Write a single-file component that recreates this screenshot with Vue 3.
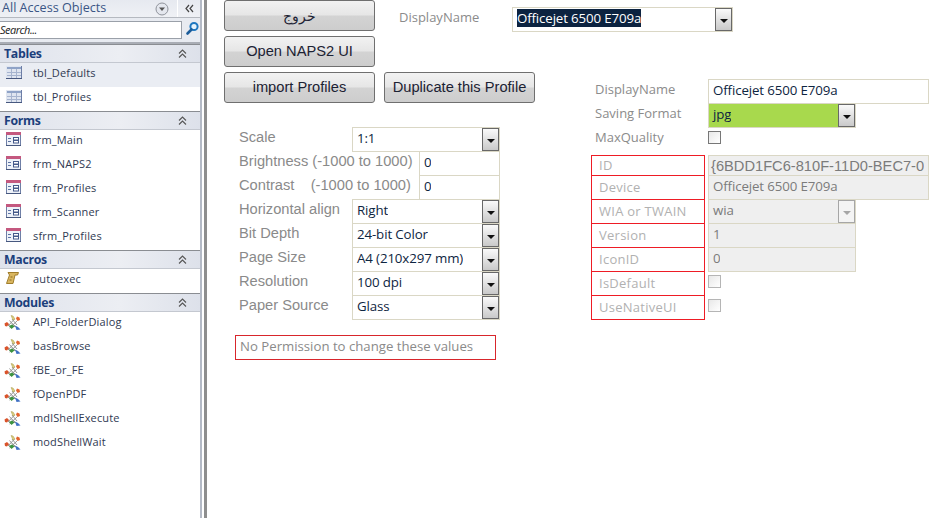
<script setup>
const navGroups = [
  { title: 'Tables', kind: 'table', items: ['tbl_Defaults', 'tbl_Profiles'] },
  { title: 'Forms', kind: 'form', items: ['frm_Main', 'frm_NAPS2', 'frm_Profiles', 'frm_Scanner', 'sfrm_Profiles'] },
  { title: 'Macros', kind: 'macro', items: ['autoexec'] },
  { title: 'Modules', kind: 'module', items: ['API_FolderDialog', 'basBrowse', 'fBE_or_FE', 'fOpenPDF', 'mdlShellExecute', 'modShellWait'] },
]
const scanRows = [
  { label: 'Scale', value: '1:1', combo: true },
  { label: 'Brightness (-1000 to 1000)', value: '0', wide: true },
  { label: 'Contrast    (-1000 to 1000)', value: '0', wide: true },
  { label: 'Horizontal align', value: 'Right', combo: true },
  { label: 'Bit Depth', value: '24-bit Color', combo: true },
  { label: 'Page Size', value: 'A4 (210x297 mm)', combo: true },
  { label: 'Resolution', value: '100 dpi', combo: true },
  { label: 'Paper Source', value: 'Glass', combo: true },
]
const lockedRows = [
  { label: 'ID', value: '{6BDD1FC6-810F-11D0-BEC7-0', type: 'id' },
  { label: 'Device', value: 'Officejet 6500 E709a', type: 'long' },
  { label: 'WIA or TWAIN', value: 'wia', type: 'combo' },
  { label: 'Version', value: '1', type: 'short' },
  { label: 'IconID', value: '0', type: 'short' },
  { label: 'IsDefault', type: 'check' },
  { label: 'UseNativeUI', type: 'check' },
]
</script>

<template>
  <div class="app">
    <aside class="nav">
      <div class="nav-head">
        <span class="nav-title">All Access Objects</span>
        <svg class="head-drop" width="14" height="14" viewBox="0 0 14 14"><circle cx="7" cy="7" r="6" fill="#e4e7ee" stroke="#8f939b"/><path d="M4 5.500h6L7 9z" fill="#555"/></svg>
        <span class="head-collapse">
          <svg width="9" height="9" viewBox="0 0 9 9" fill="none" stroke="#444" stroke-width="1.200"><path d="M4 1 1 4.500 4 8M8 1 5 4.500 8 8"/></svg>
        </span>
      </div>
      <div class="search">
        <div class="search-box">Search...</div>
        <svg width="15" height="15" viewBox="0 0 15 15"><circle cx="9" cy="5.500" r="3.600" fill="#e6f3fc" stroke="#1f78c0" stroke-width="2"/><path d="M6.500 8.500 2.500 12.500" stroke="#1b5c9a" stroke-width="2.600" stroke-linecap="round"/></svg>
      </div>
      <section v-for="g in navGroups" :key="g.title" class="group">
        <div class="group-head">
          <span>{{ g.title }}</span>
          <svg width="9" height="9" viewBox="0 0 9 9" fill="none" stroke="#555" stroke-width="1.100"><path d="M1 4.500 4.500 1 8 4.500M1 8.500 4.500 5 8 8.500"/></svg>
        </div>
        <div v-for="item in g.items" :key="item" class="nav-row" :class="{ hot: item === 'tbl_Defaults' }">
          <svg v-if="g.kind === 'table'" class="ico" width="16" height="13" viewBox="0 0 16 13">
            <rect width="16" height="13" fill="#6d7ea6"/>
            <rect x="0" y="0" width="15" height="12" fill="#dfe5f0"/>
            <rect x="1" y="1" width="14" height="2" fill="#8fa3c7"/>
            <path d="M1 6.500h14M1 9.500h14M5.500 3v9M10.500 3v9" stroke="#a6b4cf"/>
            <rect x="0" y="12" width="16" height="1" fill="#47587f"/>
          </svg>
          <svg v-else-if="g.kind === 'form'" class="ico" width="15" height="14" viewBox="0 0 15 14">
            <rect x=".5" y=".5" width="14" height="13" fill="#eef2f9" stroke="#6f7fa6"/>
            <rect x="0" y="0" width="15" height="3" fill="#c4587f"/>
            <path d="M2 6.500h3M2 9.500h3" stroke="#5d74a5"/>
            <rect x="7.500" y="5.500" width="5" height="2.500" fill="#fff" stroke="#44598a"/>
            <rect x="7.500" y="8.500" width="5" height="2.500" fill="#fff" stroke="#44598a"/>
            <rect x="0" y="13" width="15" height="1" fill="#47587f"/>
          </svg>
          <svg v-else-if="g.kind === 'macro'" class="ico macro" width="13" height="12" viewBox="0 0 13 12">
            <path d="M2 .5h10.500l-1 2.500L9 3 7 11.500H.5L3.500 3z" fill="#d9b660" stroke="#a07d2c"/>
            <path d="M4.500 5 6.500 5M3.500 8H5.500" stroke="#8c6a22"/>
          </svg>
          <svg v-else class="ico mod" width="17" height="15" viewBox="0 0 17 15">
            <path d="M3 8 7 13M5.500 5.500 11 12M8 4l5 6M13 6l-7.500 7M10.500 4 4 11M8.500 8.500 13 13" stroke="#8d8d8d" stroke-width=".9" fill="none"/>
            <path d="M7 .5l2 .5 2 3-2 1z" fill="#dccf80" stroke="#a69a4a" stroke-width=".5"/>
            <path d="M13 1.500l2.500 1 .5 2.500-2.500 1-1.500-2.500z" fill="#e2622e"/>
            <path d="M.5 8.500l2.500-1.500 2 2L3 11.500 1 11z" fill="#d9532a"/>
            <path d="M5 11l3-1.500 2.500 2L7.500 14z" fill="#3d9440"/>
            <path d="M11 10.500l3 1.500 2.500 2.500-4 .5z" fill="#3f70c4"/>
          </svg>
          <span class="nav-text">{{ item }}</span>
        </div>
      </section>
    </aside>
    <div class="gap"></div>
    <div class="splitter"></div>

    <main class="form">
      <div class="top-row">
        <button class="btn arabic">خروج</button>
        <span class="cal-label top-label">DisplayName</span>
        <div class="field top-combo">
          <span class="selected">Officejet 6500 E709a</span>
          <span class="drop"><i></i></span>
        </div>
      </div>

      <div class="body">
        <div class="left">
          <button class="btn block">Open NAPS2 UI</button>
          <div class="btn-pair">
            <button class="btn">import Profiles</button>
            <button class="btn">Duplicate this Profile</button>
          </div>

          <div class="scan">
            <div v-for="r in scanRows" :key="r.label" class="scan-row">
              <span class="arial-label" :class="{ wide: r.wide }">{{ r.label }}</span>
              <div class="field grow">
                <span class="val">{{ r.value }}</span>
                <span v-if="r.combo" class="drop"><i></i></span>
              </div>
            </div>
          </div>

          <div class="note">No Permission to change these values</div>
        </div>

        <div class="right">
          <div class="pr">
            <span class="cal-label pr-label">DisplayName</span>
            <div class="field w-long"><span class="val">Officejet 6500 E709a</span></div>
          </div>
          <div class="pr">
            <span class="cal-label pr-label">Saving Format</span>
            <div class="field w-short green"><span class="val">jpg</span><span class="drop"><i></i></span></div>
          </div>
          <div class="pr">
            <span class="cal-label pr-label">MaxQuality</span>
            <span class="check strong"></span>
          </div>

          <div v-for="r in lockedRows" :key="r.label" class="pr locked" :class="{ 'pr-id': r.type === 'id' }">
            <span class="red-label">{{ r.label }}</span>
            <span v-if="r.type === 'check'" class="check"></span>
            <div v-else class="field off" :class="r.type === 'id' || r.type === 'long' ? 'w-long' : 'w-short'">
              <span class="val" :class="{ idtext: r.type === 'id' }">{{ r.value }}</span>
              <span v-if="r.type === 'combo'" class="drop off-drop"><i></i></span>
            </div>
          </div>
        </div>
      </div>
    </main>
  </div>
</template>

<style>
html, body { margin: 0; background: #fff; overflow: hidden; }
</style>

<style scoped>
.app {
  display: flex;
  width: 952px;
  height: 518px;
  overflow: hidden;
  background: #fff;
  font-family: "Liberation Sans", Arial, sans-serif;
}
.nav {
  width: 200px;
  flex: none;
  border-right: 2px solid #b4bac6;
}
.gap { width: 2px; flex: none; }
.splitter { width: 3px; flex: none; background: #8e8e8e; }

.nav-head {
  height: 17px;
  display: flex;
  align-items: center;
  padding-left: 2px;
  background: linear-gradient(#e6e9f0, #eff1f5);
  border-bottom: 1px solid #b5b9c0;
}
.nav-title {
  flex: 1;
  padding-bottom: 2px;
  font: 12.600px/14px "Open Sans", sans-serif;
  color: #3a5585;
}
.head-drop { margin-right: 8px; }
.head-collapse {
  width: 22px;
  height: 17px;
  display: flex;
  align-items: center;
  justify-content: center;
  border-left: 1px solid #fff;
}
.search {
  height: 21px;
  display: flex;
  align-items: flex-start;
  gap: 3px;
  padding-top: 3px;
  background: #e8ebf1;
  border-bottom: 2px solid #a9adb5;
}
.search-box {
  width: 182px;
  height: 18px;
  box-sizing: border-box;
  background: #fff;
  border: 1px solid #9aa0a9;
  border-left: none;
  font: italic 11px/16px "Open Sans", sans-serif;
  letter-spacing: -.5px;
  color: #222;
}
.group-head {
  height: 17px;
  border-top: 1px solid #8a8d92;
  border-bottom: 1px solid #c4c8d0;
  display: flex;
  align-items: center;
  justify-content: space-between;
  padding: 0 13px 0 4px;
  background: linear-gradient(90deg, #dfe3ec, #eceef3 60%, #dde1ea);
  font: 700 12.300px/17px "Open Sans", sans-serif;
  letter-spacing: -.3px;
  color: #1c3f7c;
}
.nav-row {
  position: relative;
  height: 24px;
  display: flex;
  align-items: center;
  padding-left: 6px;
  background: #fff;
}
.nav-row.hot { background: #eaedf3; }
.ico { flex: none; margin-top: -6px; }
.ico.mod { margin-left: -2px; margin-top: -3px; }
.nav-text {
  position: absolute;
  left: 33px;
  top: 3px;
  font: 11px/14px "Open Sans", sans-serif;
  letter-spacing: .15px;
  color: #303a52;
}

.form { flex: 1; padding-left: 17px; min-width: 0; }
.btn {
  display: block;
  width: 151px;
  height: 31px;
  box-sizing: border-box;
  padding: 0;
  border: 1px solid #6f6f6f;
  border-radius: 3px;
  background: linear-gradient(#f2f2f2, #e6e6e6 48%, #d3d3d3 52%, #cdcdcd);
  font: 14.670px/1 "Liberation Sans", sans-serif;
  color: #1c2233;
}
.arabic { font-size: 14px; }
.top-row { display: flex; height: 36px; }
.top-label { margin: 9px 0 0 24px; width: 113px; }
.cal-label {
  font: 13px/17px "Open Sans", sans-serif;
  color: #8b8b8b;
}
.field {
  display: flex;
  align-items: center;
  height: 25px;
  box-sizing: border-box;
  background: #fff;
  border: 1px solid #dad7c5;
  position: relative;
}
.val {
  padding: 0 0 4px 4px;
  font: 13.300px/16px "Open Sans", sans-serif;
  letter-spacing: -.12px;
  color: #0e2541;
  white-space: nowrap;
  overflow: hidden;
}
.top-combo { width: 221px; margin-top: 7px; align-items: flex-start; }
.selected {
  margin: 1px 0 0 4px;
  background: #0c2340;
  color: #fff;
  font: 13.300px/18px "Open Sans", sans-serif;
  letter-spacing: -.14px;
}
.drop {
  position: absolute;
  right: 0;
  top: 0;
  width: 17px;
  height: 23px;
  box-sizing: border-box;
  border: 1px solid #686868;
  background: linear-gradient(#fafafa, #c9c9c9);
  display: flex;
  align-items: center;
  justify-content: center;
}
.drop i {
  width: 0;
  height: 0;
  margin-top: 3px;
  border: 4px solid transparent;
  border-top: 4px solid #111;
  border-bottom: 0;
}
.body { display: flex; }
.left { width: 367px; flex: none; }
.block { margin-bottom: 5px; }
.btn-pair { display: flex; gap: 9px; }
.scan { margin: 24px 0 0 15px; }
.scan-row { display: flex; height: 24px; width: 261px; }
.arial-label {
  width: 113px;
  flex: none;
  padding-top: 1px;
  font: 14.670px/19px "Liberation Sans", sans-serif;
  color: #8a8a8a;
  white-space: pre;
}
.arial-label.wide { width: 180px; }
.grow { flex: 1; }
.note {
  width: 261px;
  height: 25px;
  box-sizing: border-box;
  margin: 16px 0 0 11px;
  border: 1px solid #d8262c;
  padding-left: 4px;
  font: 13.200px/20px "Open Sans", sans-serif;
  color: #8a8a8a;
}
.right { padding-top: 43px; }
.pr { display: flex; height: 24px; padding-left: 4px; }
.pr-label { width: 113px; flex: none; line-height: 20px; }
.w-long { width: 221px; }
.w-short { width: 148px; }
.green { background: #a8d94d; }
.check {
  width: 13px;
  height: 13px;
  margin-top: 4px;
  box-sizing: border-box;
  border: 1px solid #b5b5b5;
  background: linear-gradient(135deg, #e8e8e8, #fff);
}
.check.strong { border-color: #777; }
.locked { padding-left: 0; }
.pr-id { height: 20px; margin-top: 4px; }
.pr-id .field { height: 21px; }
.pr-id .red-label { height: 21px; line-height: 18px; }
.red-label {
  width: 114px;
  height: 25px;
  flex: none;
  box-sizing: border-box;
  margin-right: 3px;
  border: 1px solid #ee1c25;
  padding-left: 7px;
  font: 13px/22px "Open Sans", sans-serif;
  letter-spacing: .02em;
  color: #b1b1b1;
}
.off { background: #efefef; }
.off .val { color: #7b7b7b; }
.val.idtext {
  padding: 0 0 0 2px;
  font: 14.670px/18px "Liberation Sans", sans-serif;
  letter-spacing: 0;
}
.off-drop { border-color: #a6a6a6; background: #f4f4f4; }
.off-drop i { border-top-color: #a6a6a6; }
</style>
